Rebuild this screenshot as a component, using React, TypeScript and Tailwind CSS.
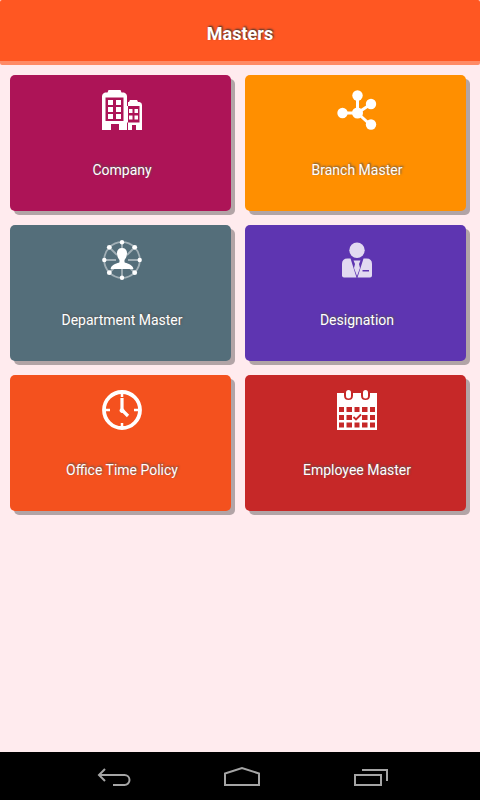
import type { ReactNode } from 'react';

const CompanyIcon = () => (
  <svg width="40" height="40" viewBox="0 0 40 40" fill="white">
    <path
      fillRule="evenodd"
      d="M6.500 0h12l1 2.500h2.500q3 1 3 4V40h-8v-6H9v6H0V6.500q0-3 3-4h2.500zM3.500 7.500v23.500h18V7.500z"
    />
    <path d="M6 10h5v5H6zM14 10h5v5h-5zM6 17h5v5H6zM14 17h5v5h-5zM6 24h5v5H6zM14 24h5v5h-5z" />
    <path
      fillRule="evenodd"
      d="M28 10h7l1 2h1.500q2.500.5 2.500 3V40h-6v-5h-4v5h-4V12h1zM25 16v16.500h12.500V16z"
    />
    <path d="M27 19h3.500v4H27zM32.500 19H36v4h-3.500zM27 25.500h3.500v4H27zM32.500 25.500H36v4h-3.500z" />
  </svg>
);

const BranchIcon = () => (
  <svg width="40" height="40" viewBox="0 0 40 40" fill="white">
    <path d="M20.500 5v18H5M20.500 23 34 14M20.500 23l13 12" fill="none" stroke="white" strokeWidth="3" />
    <circle cx="20.500" cy="5.500" r="5.200" />
    <circle cx="34" cy="14" r="5.200" />
    <circle cx="5.500" cy="23" r="5.200" />
    <circle cx="20.500" cy="23" r="5.500" />
    <circle cx="34" cy="34.500" r="5.200" />
  </svg>
);

const DepartmentIcon = () => (
  <svg width="40" height="40" viewBox="0 0 40 40" fill="white">
    <circle cx="20" cy="20" r="17.800" fill="none" stroke="white" strokeOpacity="0.45" strokeWidth="1.800" />
    <path
      d="M20 2v6M20 28v10M2 20h12M26 20h12M7 7l8 8M33 7l-8 8M7 33l5-5M33 33l-5-5"
      stroke="white"
      strokeOpacity="0.45"
      strokeWidth="1.800"
    />
    <circle cx="20" cy="2.300" r="2.200" />
    <circle cx="20" cy="37.700" r="2.200" />
    <circle cx="2.300" cy="20" r="2.200" />
    <circle cx="37.700" cy="20" r="2.200" />
    <circle cx="7.300" cy="7.300" r="2.400" />
    <circle cx="32.700" cy="7.300" r="2.400" />
    <circle cx="7.300" cy="32.700" r="2.400" />
    <circle cx="32.700" cy="32.700" r="2.400" />
    <path d="M20 8c3.500 0 5.200 2.300 5 5.500-.2 3-1.200 5-2.500 6.500v2.200c1.500 1.300 7.500 1.600 8.800 6V29H8.700v-.8c1.300-4.400 7.300-4.700 8.800-6V20c-1.300-1.500-2.300-3.500-2.500-6.500C14.800 10.300 16.500 8 20 8z" />
  </svg>
);

const DesignationIcon = () => (
  <svg width="40" height="40" viewBox="0 0 40 40" fill="white" fillOpacity="0.82">
    <circle cx="20" cy="10.300" r="7.700" />
    <path d="M10.500 18.500h3L19.500 37.500H7Q5 37.500 5 35.500V24Q5 18.500 10.500 18.500z" />
    <path
      fillRule="evenodd"
      d="M26.500 18.500h3Q35 18.500 35 24v11.500q0 2-2 2H20.500zM25.500 30v1.500h6.500V30z"
    />
    <path d="M16.500 20.500h7L22 24l1 4-3 8-3-8 1-4z" />
  </svg>
);

const ClockIcon = () => (
  <svg width="40" height="40" viewBox="0 0 40 40" fill="none" stroke="white">
    <circle cx="20" cy="20" r="18" strokeWidth="3.800" />
    <path d="M20 2v5M20 33v5M2 20h6M32 20h6" strokeWidth="2.500" />
    <path d="M20 8v12l6 6" strokeWidth="3.200" />
    <circle cx="20" cy="20.500" r="2" fill="white" />
  </svg>
);

const CalendarIcon = () => (
  <svg width="40" height="40" viewBox="0 0 40 40">
    <path d="M0 3h7v2.500q0 4.500 4.500 4.500t4.500-4.500V3h8v2.500q0 4.500 4.500 4.500t4.500-4.500V3h7v37H0z" fill="white" />
    <rect x="9" y="0" width="5" height="8.500" rx="2.500" fill="white" />
    <rect x="26" y="0" width="5" height="8.500" rx="2.500" fill="white" />
    <path
      d="M2 17h5v5H2zM9.500 17h5.500v5H9.500zM17.500 17h5v5h-5zM25 17h5.500v5H25zM33 17h5v5h-5zM2 25h5v5H2zM9.500 25h5.500v5H9.500zM25 25h5.500v5H25zM33 25h5v5h-5zM2 32.500h5v5H2zM9.500 32.500h5.500v5H9.500zM17.500 32.500h5v5h-5zM25 32.500h5.500v5H25zM33 32.500h5v5h-5z"
      fill="#c62828"
    />
    <path d="m16.500 27 2.500 2.500 5-5" fill="none" stroke="#c62828" strokeWidth="1.800" />
  </svg>
);

const cards: { label: string; color: string; icon: ReactNode }[] = [
  { label: 'Company', color: 'bg-[#ad1457]', icon: <CompanyIcon /> },
  { label: 'Branch Master', color: 'bg-[#ff8f00]', icon: <BranchIcon /> },
  { label: 'Department Master', color: 'bg-[#546e7a]', icon: <DepartmentIcon /> },
  { label: 'Designation', color: 'bg-[#5e35b1]', icon: <DesignationIcon /> },
  { label: 'Office Time Policy', color: 'bg-[#f4511e]', icon: <ClockIcon /> },
  { label: 'Employee Master', color: 'bg-[#c62828]', icon: <CalendarIcon /> },
];

const NavBar = () => (
  <nav className="grid h-12 grid-cols-3 bg-black pl-[50px] pr-[46px] text-[#a5a5a5]">
    <button aria-label="Back" className="flex items-center justify-center">
      <svg width="36" height="24" viewBox="0 0 36 24" fill="none" stroke="currentColor" strokeWidth="2">
        <path d="M9 5 3 11l6 6M3 11h25.500a5 5 0 0 1 0 10H17" />
      </svg>
    </button>
    <button aria-label="Home" className="flex items-center justify-center">
      <svg width="36" height="24" viewBox="0 0 36 24" fill="none" stroke="currentColor" strokeWidth="2">
        <path d="M1 21V9.500L18 4l17 5.500V21z" />
      </svg>
    </button>
    <button aria-label="Recent apps" className="flex items-center justify-center">
      <svg width="36" height="24" viewBox="0 0 36 24" fill="none" stroke="currentColor" strokeWidth="2">
        <path d="M3 11h26v10H3zM10 6h25v11" />
      </svg>
    </button>
  </nav>
);

export default function App() {
  return (
    <div className="flex min-h-screen flex-col bg-[#ffebee] font-['Roboto',sans-serif] text-white">
      <header className="flex h-[65px] items-center justify-center rounded-xs border-b-4 border-[#ff8a65] bg-[#ff5722] pt-[6px]">
        <h1 className="text-lg font-bold [text-shadow:1px_-1px_2px_#333]">Masters</h1>
      </header>

      <main className="grid flex-1 auto-rows-min grid-cols-2 gap-[14px] py-[10px] pl-[10px] pr-[14px]">
        {cards.map((card) => (
          <button
            key={card.label}
            className={`flex h-[136px] flex-col items-center rounded-[5px] pl-[3px] pt-[15px] shadow-[4px_4px_0_rgba(0,0,0,0.3)] ${card.color}`}
          >
            {card.icon}
            <span className="mt-[30px] text-sm [text-shadow:1px_-1px_2px_#555]">{card.label}</span>
          </button>
        ))}
      </main>

      <NavBar />
    </div>
  );
}
